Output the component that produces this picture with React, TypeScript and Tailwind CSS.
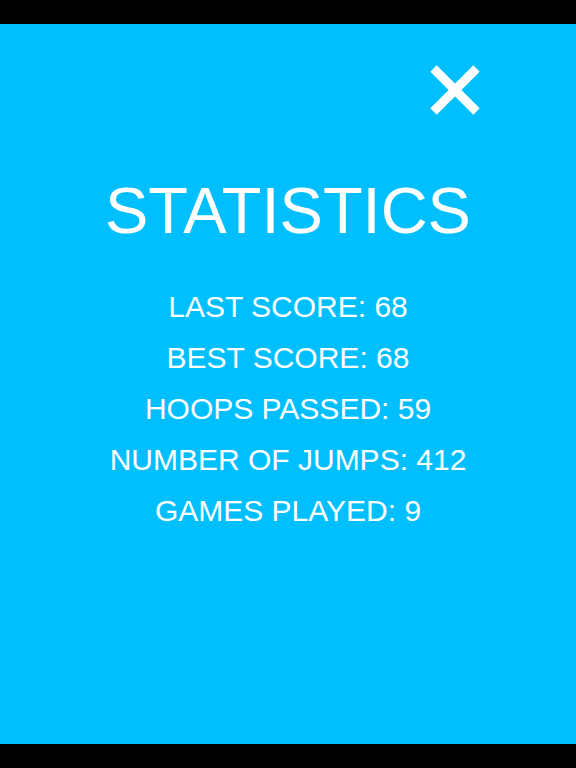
import React from "react";

const stats = [
  { label: "LAST SCORE", value: 68 },
  { label: "BEST SCORE", value: 68 },
  { label: "HOOPS PASSED", value: 59 },
  { label: "NUMBER OF JUMPS", value: 412 },
  { label: "GAMES PLAYED", value: 9 },
];

export default function App() {
  return (
    <div className="w-[576px] h-[768px] bg-black flex flex-col font-['Liberation_Sans',Arial,sans-serif]">
      <div className="h-[24px] shrink-0" />
      <div className="flex-1 bg-[#00bfff] flex flex-col text-white">
        {/* close button */}
        <div className="flex justify-end pt-[41px] pr-[96px]">
          <button className="w-[50px] h-[50px]" aria-label="Close">
            <svg width="50" height="50" viewBox="0 0 50 50">
              <path d="M3.5 3.5L46.5 46.5M46.5 3.5L3.5 46.5" stroke="white" strokeWidth={9} />
            </svg>
          </button>
        </div>

        <h1 className="mt-[63px] text-center text-[65px] leading-[65px]">STATISTICS</h1>

        <div className="mt-[38px] flex flex-col items-center">
          {stats.map(s => (
            <div key={s.label} className="text-[30px] leading-[51px]">
              {s.label}: {s.value}
            </div>
          ))}
        </div>
      </div>
      <div className="h-[24px] shrink-0" />
    </div>
  );
}
